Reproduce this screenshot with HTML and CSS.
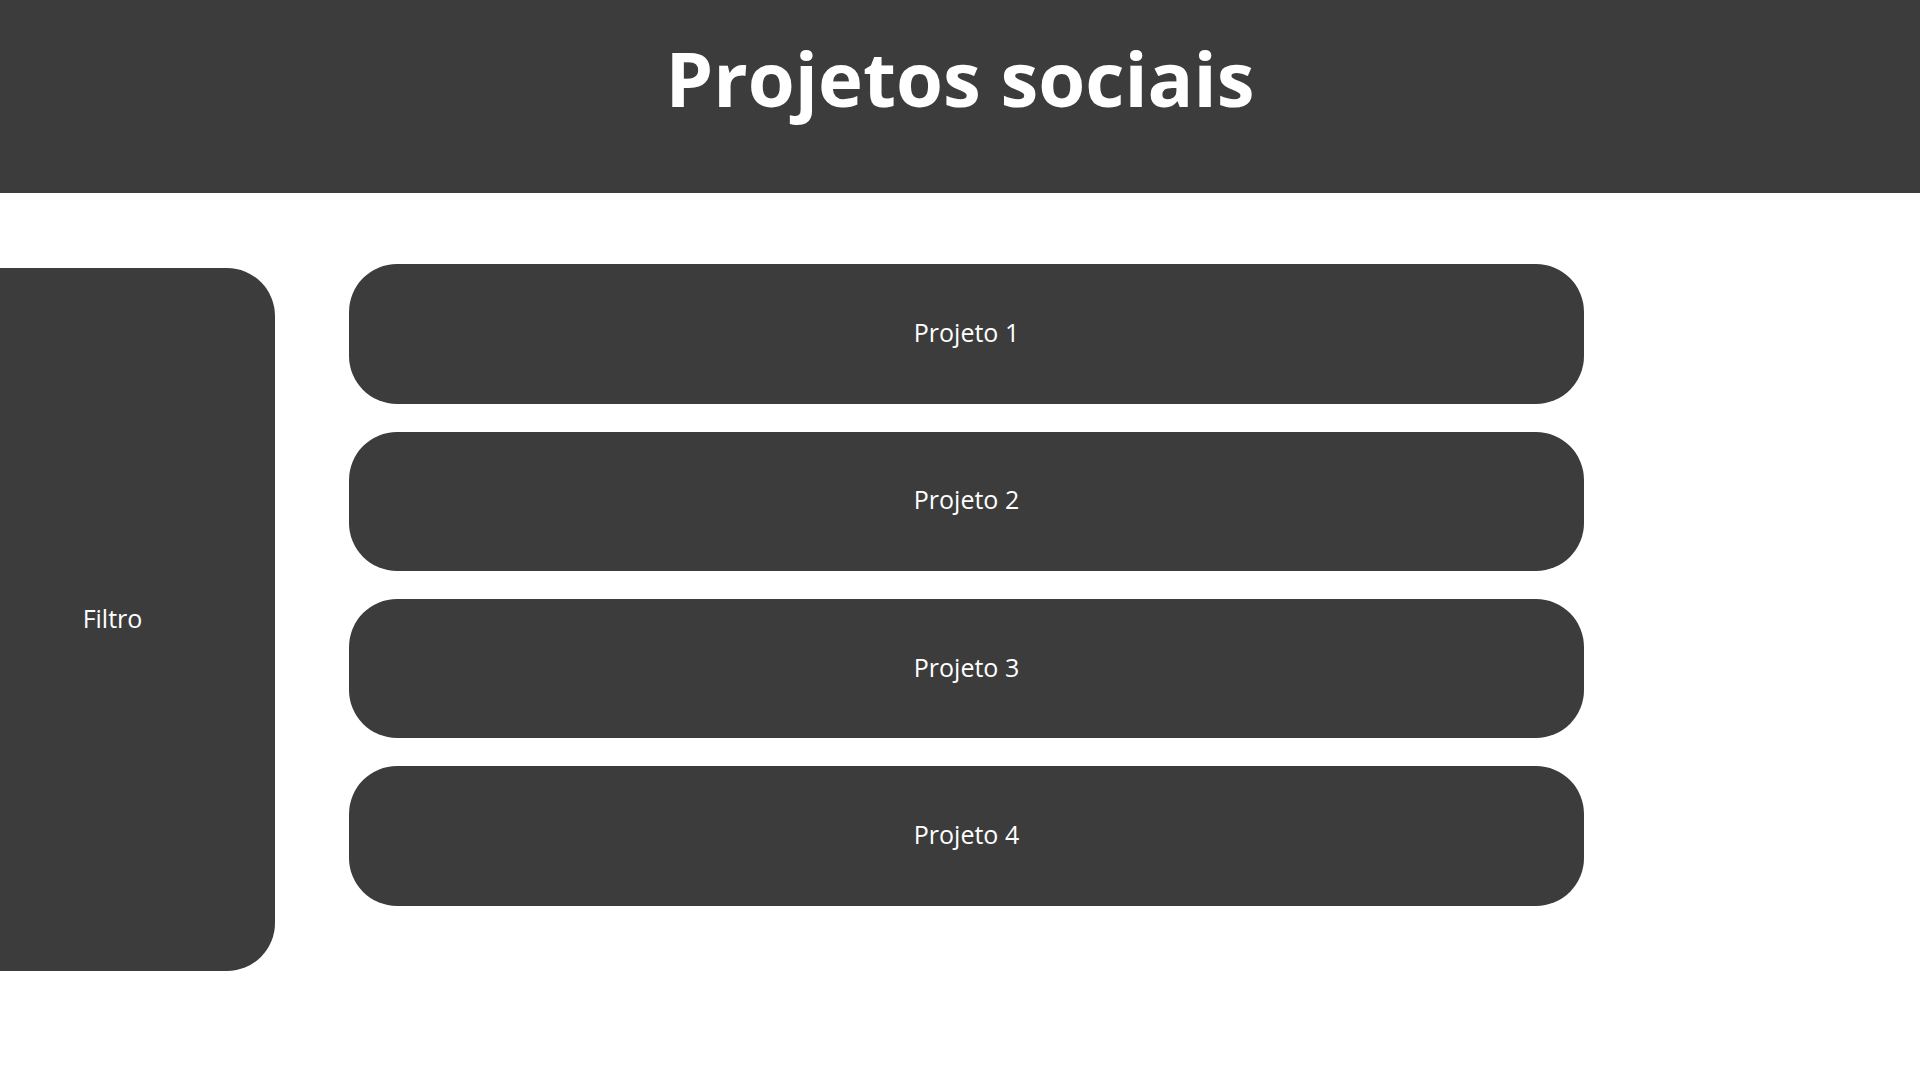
FILE: index.html
```html
<!DOCTYPE html>
<html lang="pt">
<head>
<meta charset="utf-8">
<title>Projetos sociais</title>
<link rel="stylesheet" href="styles.css">
</head>
<body>
<header class="topbar">
  <h1 class="title">Projetos sociais</h1>
</header>
<main class="content">
  <aside class="filter">Filtro</aside>
  <section class="projects">
    <div class="project">Projeto 1</div>
    <div class="project">Projeto 2</div>
    <div class="project">Projeto 3</div>
    <div class="project">Projeto 4</div>
  </section>
</main>
</body>
</html>
```
FILE: styles.css
```css
html, body {
  margin: 0;
  padding: 0;
  background: #ffffff;
  font-family: "Open Sans", "Noto Sans", sans-serif;
}
.topbar {
  height: 193px;
  background: #3c3c3c;
  display: flex;
  justify-content: center;
  align-items: flex-start;
}
.title {
  margin: 0;
  padding-top: 32px;
  color: #ffffff;
  font-size: 76px;
  font-weight: 700;
  line-height: 1.2;
}
.content {
  display: flex;
  align-items: flex-start;
  gap: 74px;
  padding-top: 71.3px;
}
.filter {
  margin-left: -50px;
  margin-top: 3.7px;
  width: 325px;
  height: 703px;
  box-sizing: border-box;
  padding-bottom: 3px;
  background: #3c3c3c;
  border-radius: 48px;
  color: #ffffff;
  font-size: 25px;
  display: flex;
  align-items: center;
  justify-content: center;
}
.projects {
  display: flex;
  flex-direction: column;
  gap: 27.8px;
  width: 1235px;
}
.project {
  height: 139.5px;
  box-sizing: border-box;
  padding-bottom: 4px;
  background: #3c3c3c;
  border-radius: 48px;
  color: #ffffff;
  font-size: 25px;
  display: flex;
  align-items: center;
  justify-content: center;
}
```
